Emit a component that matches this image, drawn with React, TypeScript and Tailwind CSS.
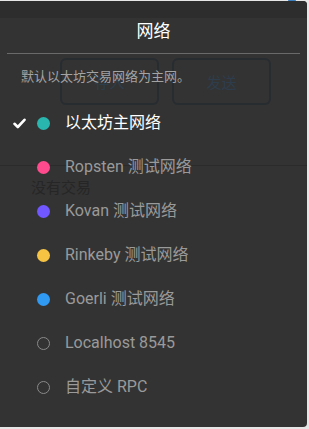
import React from "react";

type Net = { name: string; color?: string; active?: boolean };

const networks: Net[] = [
  { name: "以太坊主网络", color: "#29b6af", active: true },
  { name: "Ropsten 测试网络", color: "#ff4a8d" },
  { name: "Kovan 测试网络", color: "#7057ff" },
  { name: "Rinkeby 测试网络", color: "#f6c343" },
  { name: "Goerli 测试网络", color: "#3099f2" },
  { name: "Localhost 8545" },
  { name: "自定义 RPC" },
];

function Check() {
  return (
    <svg width="13" height="11" viewBox="0 0 13 11">
      <path d="M1.5 5.8 L4.8 9 L11.5 1.8" fill="none" stroke="#fff" strokeWidth="2.6" strokeLinecap="round" strokeLinejoin="round" />
    </svg>
  );
}

export default function App() {
  return (
    <div
      className="relative w-[309px] h-[429px] overflow-hidden bg-[#e6e6e6]"
      style={{ fontFamily: "Roboto, 'Noto Sans CJK SC', sans-serif" }}
    >
      <div className="absolute left-[288px] top-0 w-[8px] h-[2px] rounded-b bg-[#3a7fc0]" />
      <div className="relative mt-[1px] w-[307px] h-[426px] rounded-tr-[4px] rounded-br-[4px] bg-[#333333] overflow-hidden">
        {/* page behind the menu */}
        <div className="h-[17px] bg-[#2d2d2d]" />
        <div className="flex gap-[13px] pl-[60px] pt-[40px]">
          <div className="w-[99px] h-[47px] rounded-[6px] border-2 border-[#272c31] flex items-center justify-center pt-[3px] text-[15px] text-[#2e3d4c]">
            存入
          </div>
          <div className="w-[99px] h-[47px] rounded-[6px] border-2 border-[#272c31] flex items-center justify-center pt-[3px] text-[15px] text-[#2e3d4c]">
            发送
          </div>
        </div>
        <div className="mt-[60px] h-px bg-[#2b2b2b]" />
        <div className="pl-[31px] pt-[11px] text-[15px] text-[#262626]">没有交易</div>

        {/* network menu */}
        <div className="absolute inset-0 flex flex-col">
          <div className="h-[52px] flex items-center justify-center pt-[9px] text-[17px] text-white">网络</div>
          <div className="mx-[7px] h-px bg-[#6a6a6a]" />
          <div className="pl-[21px] pt-[13px] h-[47px] text-[13px] text-[#a3a3a3]">默认以太坊交易网络为主网。</div>
          <div className="flex flex-col">
            {networks.map((n) => (
              <div key={n.name} className="flex items-center h-[44px]">
                <div className="w-[37px] flex justify-center pl-[2px]">{n.active && <Check />}</div>
                <div className="w-[28px] flex">
                  {n.color ? (
                    <span className="w-[13px] h-[13px] rounded-full" style={{ backgroundColor: n.color }} />
                  ) : (
                    <span className="w-[13px] h-[13px] rounded-full border-[1.5px] border-[#8a8a8a]" />
                  )}
                </div>
                <span className={n.active ? "text-[16px] text-white" : "text-[16px] text-[#9a9a9a]"}>{n.name}</span>
              </div>
            ))}
          </div>
        </div>
      </div>
    </div>
  );
}
